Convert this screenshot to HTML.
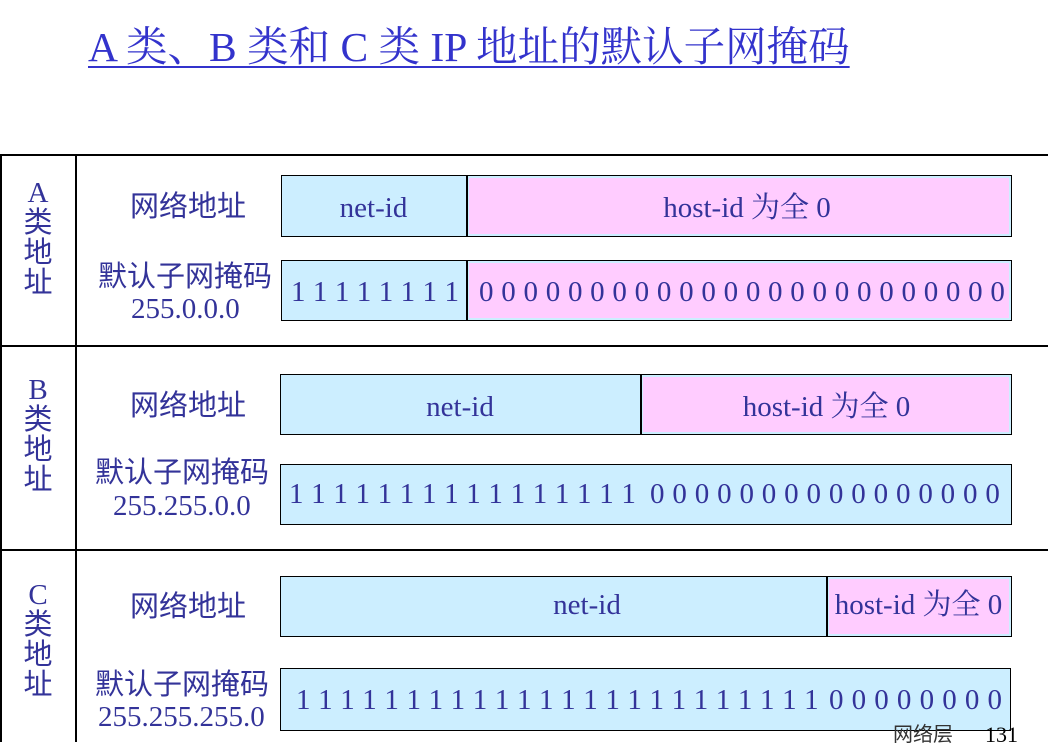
<!DOCTYPE html>
<html><head><meta charset="utf-8"><style>
*{margin:0;padding:0;box-sizing:border-box}
body{width:1048px;height:742px;overflow:hidden;background:#fff;position:relative;font-family:"Liberation Serif","Noto Serif CJK SC",serif;color:#333399}
.a{position:absolute;white-space:nowrap;line-height:1}
.ln{position:absolute;background:#000}
.box{position:absolute;border:1.5px solid #000;background:#cceeff}
.pk{position:absolute;background:#ffccff;top:2px;bottom:2px}
.sep{position:absolute;top:0;bottom:0;width:2px;background:#000}
.c{text-align:center}
.cj{font-family:"Liberation Sans","Noto Sans CJK SC",sans-serif;font-size:29px}
.v{position:absolute;width:76px;text-align:center;font-size:29px;line-height:30px;font-family:"Liberation Serif","Noto Sans CJK SC",serif}
.d{position:absolute;display:flex;justify-content:space-between;font-size:29px;line-height:1}
.t{font-size:29px}
.n{font-size:29px}
</style></head><body>
<div class="a" style="left:88px;top:27px;font-size:41.5px;color:#3333cc;text-decoration:underline;text-decoration-thickness:2px;text-underline-offset:5px">A 类、B 类和 C 类 IP 地址的默认子网掩码</div>

<div class="ln" style="left:0;top:154px;width:1048px;height:1.5px"></div>
<div class="ln" style="left:0;top:345px;width:1048px;height:1.5px"></div>
<div class="ln" style="left:0;top:549px;width:1048px;height:1.5px"></div>
<div class="ln" style="left:0;top:154px;width:1.5px;height:588px"></div>
<div class="ln" style="left:75px;top:154px;width:1.5px;height:588px"></div>

<div class="v" style="left:0;top:178px">A<br>类<br>地<br>址</div>
<div class="v" style="left:0;top:375px">B<br>类<br>地<br>址</div>
<div class="v" style="left:0;top:580px">C<br>类<br>地<br>址</div>

<div class="a cj" style="left:130px;top:193px">网络地址</div>
<div class="a cj" style="left:98px;top:263px">默认子网掩码</div>
<div class="a n" style="left:131px;top:295px">255.0.0.0</div>
<div class="a cj" style="left:130px;top:392px">网络地址</div>
<div class="a cj" style="left:95px;top:459px">默认子网掩码</div>
<div class="a n" style="left:113px;top:492px">255.255.0.0</div>
<div class="a cj" style="left:130px;top:593px">网络地址</div>
<div class="a cj" style="left:95px;top:671px">默认子网掩码</div>
<div class="a n" style="left:98px;top:703px">255.255.255.0</div>

<!-- A -->
<div class="box" style="left:281px;top:175px;width:731px;height:62px">
 <div class="pk" style="left:187px;right:2px"></div><div class="sep" style="left:184px"></div>
</div>
<div class="a t c" style="left:281px;width:185px;top:194px">net-id</div>
<div class="a t c" style="left:468px;width:558px;top:194px">host-id 为全 0</div>
<div class="box" style="left:281px;top:260px;width:731px;height:61px">
 <div class="pk" style="left:187px;right:2px"></div><div class="sep" style="left:184px"></div>
</div>
<div class="d" style="left:291px;width:168px;top:278px"><span>1</span><span>1</span><span>1</span><span>1</span><span>1</span><span>1</span><span>1</span><span>1</span></div>
<div class="d" style="left:479px;width:526px;top:278px"><span>0</span><span>0</span><span>0</span><span>0</span><span>0</span><span>0</span><span>0</span><span>0</span><span>0</span><span>0</span><span>0</span><span>0</span><span>0</span><span>0</span><span>0</span><span>0</span><span>0</span><span>0</span><span>0</span><span>0</span><span>0</span><span>0</span><span>0</span><span>0</span></div>

<!-- B -->
<div class="box" style="left:280px;top:374px;width:732px;height:61px">
 <div class="pk" style="left:362px;right:2px"></div><div class="sep" style="left:359px"></div>
</div>
<div class="a t c" style="left:280px;width:360px;top:393px">net-id</div>
<div class="a t c" style="left:642px;width:369px;top:393px">host-id 为全 0</div>
<div class="box" style="left:280px;top:464px;width:732px;height:61px"></div>
<div class="d" style="left:289px;width:347px;top:480px"><span>1</span><span>1</span><span>1</span><span>1</span><span>1</span><span>1</span><span>1</span><span>1</span><span>1</span><span>1</span><span>1</span><span>1</span><span>1</span><span>1</span><span>1</span><span>1</span></div>
<div class="d" style="left:650px;width:350px;top:480px"><span>0</span><span>0</span><span>0</span><span>0</span><span>0</span><span>0</span><span>0</span><span>0</span><span>0</span><span>0</span><span>0</span><span>0</span><span>0</span><span>0</span><span>0</span><span>0</span></div>

<!-- C -->
<div class="box" style="left:280px;top:576px;width:732px;height:61px">
 <div class="pk" style="left:548px;right:2px"></div><div class="sep" style="left:545px"></div>
</div>
<div class="a t c" style="left:280px;width:614px;top:591px">net-id</div>
<div class="a t c" style="left:828px;width:181px;top:591px">host-id 为全 0</div>
<div class="box" style="left:280px;top:668px;width:731px;height:63px"></div>
<div class="d" style="left:296px;width:523px;top:686px"><span>1</span><span>1</span><span>1</span><span>1</span><span>1</span><span>1</span><span>1</span><span>1</span><span>1</span><span>1</span><span>1</span><span>1</span><span>1</span><span>1</span><span>1</span><span>1</span><span>1</span><span>1</span><span>1</span><span>1</span><span>1</span><span>1</span><span>1</span><span>1</span></div>
<div class="d" style="left:829px;width:173px;top:686px"><span>0</span><span>0</span><span>0</span><span>0</span><span>0</span><span>0</span><span>0</span><span>0</span></div>

<div class="a" style="left:893px;top:725px;font-size:20px;color:#333;font-family:'Liberation Sans','Noto Sans CJK SC',sans-serif">网络层</div>
<div class="a" style="left:985px;top:724px;font-size:22px;color:#000">131</div>
</body></html>
